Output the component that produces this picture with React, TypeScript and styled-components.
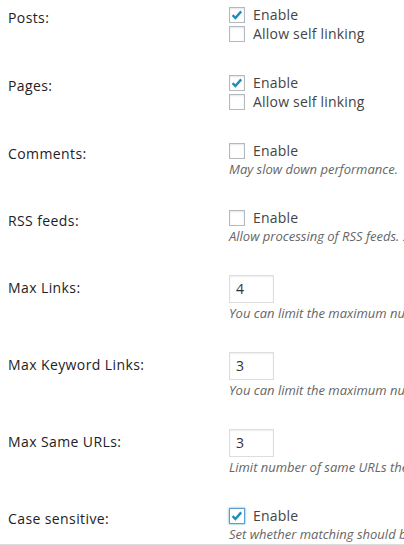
import React from "react";
import styled, { createGlobalStyle, css } from "styled-components";

const Global = createGlobalStyle`
  html, body { margin: 0; padding: 0; background: #fff; }
  body { font-family: "Open Sans", "Liberation Sans", sans-serif; color: #444; }
`;

const Page = styled.div`
  height: 545px;
  box-sizing: border-box;
  overflow: hidden;
  border-bottom: 1px solid #dcdcdc;
  padding-left: 8px;
`;

const Row = styled.div`
  display: grid;
  grid-template-columns: 221px 1fr;
  padding: 15px 0;
  &:first-child { padding-top: 5px; }
`;

const Label = styled.div`
  padding-top: 3px;
  font-size: 14px;
  font-weight: 400;
  letter-spacing: 0.4px;
  line-height: 19px;
  color: #1d2226;
  white-space: nowrap;
`;

const Cell = styled.div`
  display: flex;
  flex-direction: column;
  min-width: 0;
`;

const CheckLine = styled.label`
  display: flex;
  align-items: center;
  gap: 8px;
  height: 19px;
  font-size: 14px;
  line-height: 19px;
  letter-spacing: 0.2px;
  color: #444;
  white-space: nowrap;
`;

const Box = styled.span<{ $focus?: boolean }>`
  width: 16px;
  height: 16px;
  box-sizing: border-box;
  border: 1px solid #b4b9be;
  background: #fff;
  box-shadow: inset 0 1px 2px rgba(0, 0, 0, 0.1);
  display: flex;
  align-items: center;
  justify-content: center;
  flex: none;
  ${(p) =>
    p.$focus &&
    css`
      border-color: #5b9dd9;
      box-shadow: 0 0 2px rgba(30, 140, 190, 0.8);
    `}
`;

const NumInput = styled.div`
  width: 45px;
  height: 28px;
  box-sizing: border-box;
  border: 1px solid #ddd;
  box-shadow: inset 0 1px 2px rgba(0, 0, 0, 0.07);
  padding: 0 6px;
  font-size: 14px;
  line-height: 26px;
  color: #333;
`;

const Desc = styled.div<{ $gap?: number }>`
  margin-top: ${(p) => p.$gap ?? 0}px;
  font-size: 13px;
  line-height: 18px;
  font-style: italic;
  color: #666;
  white-space: nowrap;
`;

const Check = () => (
  <svg width="12" height="12" viewBox="0 0 12 12">
    <path d="M1.6 6.2 L4.4 9 L10.2 2.4" fill="none" stroke="#1e8cbe" strokeWidth="2.4" />
  </svg>
);

const Checkbox = ({ checked, focus, text }: { checked?: boolean; focus?: boolean; text: string }) => (
  <CheckLine>
    <Box $focus={focus}>{checked && <Check />}</Box>
    {text}
  </CheckLine>
);

export default function App() {
  return (
    <>
      <Global />
      <Page>
        <Row>
          <Label>Posts:</Label>
          <Cell>
            <Checkbox checked text="Enable" />
            <Checkbox text="Allow self linking" />
          </Cell>
        </Row>
        <Row>
          <Label>Pages:</Label>
          <Cell>
            <Checkbox checked text="Enable" />
            <Checkbox text="Allow self linking" />
          </Cell>
        </Row>
        <Row>
          <Label>Comments:</Label>
          <Cell>
            <Checkbox text="Enable" />
            <Desc>May slow down performance.</Desc>
          </Cell>
        </Row>
        <Row>
          <Label>RSS feeds:</Label>
          <Cell>
            <Checkbox text="Enable" />
            <Desc>Allow processing of RSS feeds. Some feed readers may not like it.</Desc>
          </Cell>
        </Row>
        <Row>
          <Label>Max Links:</Label>
          <Cell>
            <NumInput>4</NumInput>
            <Desc $gap={1}>You can limit the maximum number of different links that will be generated per post.</Desc>
          </Cell>
        </Row>
        <Row>
          <Label>Max Keyword Links:</Label>
          <Cell>
            <NumInput>3</NumInput>
            <Desc $gap={1}>You can limit the maximum number of links created with the same keyword.</Desc>
          </Cell>
        </Row>
        <Row>
          <Label>Max Same URLs:</Label>
          <Cell>
            <NumInput>3</NumInput>
            <Desc $gap={1}>Limit number of same URLs the plugin will link to.</Desc>
          </Cell>
        </Row>
        <Row>
          <Label>Case sensitive:</Label>
          <Cell>
            <Checkbox checked focus text="Enable" />
            <Desc>Set whether matching should be case sensitive.</Desc>
          </Cell>
        </Row>
      </Page>
    </>
  );
}
